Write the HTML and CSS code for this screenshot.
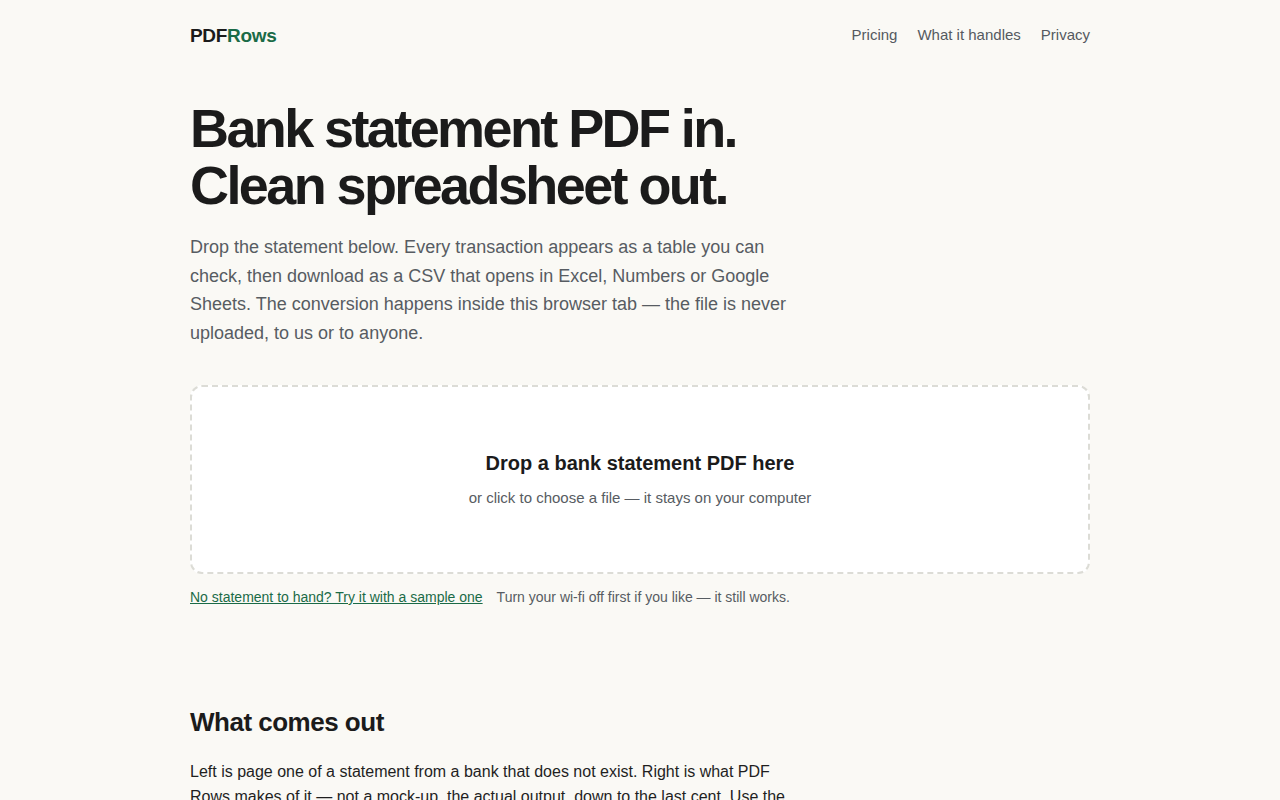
FILE: index.html
```html
<!DOCTYPE html>
<html lang="en">
<head>
<meta charset="utf-8">
<title>PDFRows — Bank statement PDF to CSV</title>
<link rel="stylesheet" href="styles.css">
</head>
<body>
<div class="wrap">
  <header class="top">
    <a class="logo" href="#">PDF<span class="logo-accent">Rows</span></a>
    <nav class="nav">
      <a href="#">Pricing</a>
      <a href="#">What it handles</a>
      <a href="#">Privacy</a>
    </nav>
  </header>

  <section class="hero">
    <h1 class="title">Bank statement PDF in.<br>Clean spreadsheet out.</h1>
    <p class="lede">Drop the statement below. Every transaction appears as a table you can check, then download as a CSV that opens in Excel, Numbers or Google Sheets. The conversion happens inside this browser tab — the file is never uploaded, to us or to anyone.</p>
  </section>

  <section class="upload">
    <div class="drop">
      <div class="drop-title">Drop a bank statement PDF here</div>
      <div class="drop-sub">or click to choose a file — it stays on your computer</div>
    </div>
    <div class="hint">
      <a class="sample" href="#">No statement to hand? Try it with a sample one</a>
      <span class="hint-text">Turn your wi-fi off first if you like — it still works.</span>
    </div>
  </section>

  <section class="out">
    <h2 class="out-title">What comes out</h2>
    <p class="out-text">Left is page one of a statement from a bank that does not exist. Right is what PDF Rows makes of it — not a mock-up, the actual output, down to the last cent. Use the sample above to try it yourself.</p>
  </section>
</div>
</body>
</html>
```

FILE: styles.css
```css
* { box-sizing: border-box; }
html, body { margin: 0; padding: 0; }
body {
  background: #faf9f5;
  color: #1b1b1b;
  font-family: "Liberation Sans", Arial, Helvetica, sans-serif;
}
.wrap {
  width: 900px;
  margin: 0 auto;
}
.top {
  display: flex;
  justify-content: space-between;
  align-items: center;
  height: 70px;
}
.logo {
  font-size: 19px;
  font-weight: 700;
  color: #1b1b1b;
  text-decoration: none;
  letter-spacing: -0.3px;
  padding-top: 1px;
}
.logo-accent { color: #1a6b47; }
.nav {
  display: flex;
  gap: 20px;
  padding-bottom: 1px;
}
.nav a {
  font-size: 15px;
  color: #555a5f;
  text-decoration: none;
}
.hero {
  padding-top: 30px;
}
.title {
  margin: 0;
  font-size: 54px;
  line-height: 57px;
  font-weight: 700;
  letter-spacing: -2.6px;
  color: #1b1b1b;
}
.lede {
  margin: 19px 0 0;
  width: 610px;
  font-size: 18px;
  line-height: 28.7px;
  color: #575c62;
}
.upload {
  margin-top: 37px;
}
.drop {
  height: 189px;
  background: #ffffff;
  border: 2px dashed #dcdcd6;
  border-radius: 12px;
  display: flex;
  flex-direction: column;
  align-items: center;
  justify-content: center;
  gap: 14px;
}
.drop-title {
  font-size: 20px;
  font-weight: 700;
  color: #1b1b1b;
}
.drop-sub {
  font-size: 15px;
  color: #575c62;
}
.hint {
  display: flex;
  gap: 14px;
  margin-top: 15px;
  font-size: 14px;
}
.sample {
  color: #1a6b47;
  text-decoration: underline;
}
.hint-text { color: #575c62; }
.out {
  padding-top: 102px;
}
.out-title {
  margin: 0;
  font-size: 26px;
  font-weight: 700;
  letter-spacing: -0.5px;
  color: #1b1b1b;
}
.out-text {
  margin: 21px 0 0;
  width: 610px;
  font-size: 16px;
  line-height: 25.5px;
  color: #1f1f1f;
}
```
